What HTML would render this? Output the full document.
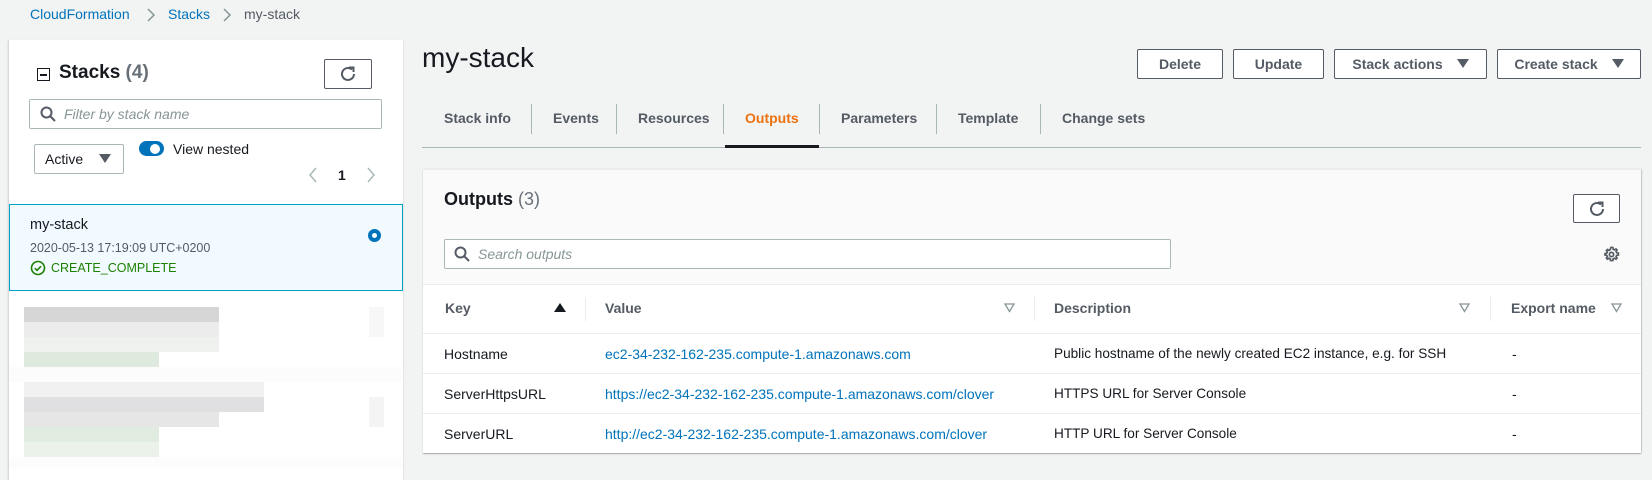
<!DOCTYPE html>
<html><head><meta charset="utf-8"><style>
*{box-sizing:border-box;margin:0;padding:0}
body{width:1652px;height:468px;overflow:hidden;background:#f2f3f3;font-family:"Liberation Sans",sans-serif;font-size:14px;color:#16191f;position:relative}
.a{position:absolute;white-space:nowrap}
.btn{position:absolute;border:1px solid #545b64;border-radius:2px;background:#fff;font-weight:bold;color:#545b64;font-size:14px;display:flex;align-items:center;justify-content:center}
.tab{position:absolute;top:110px;font-weight:bold;color:#545b64;font-size:14px}
.sep{position:absolute;top:104px;width:1px;height:30px;background:#aab7b8}
.hd{position:absolute;top:300px;font-weight:bold;color:#545b64}
.row{position:absolute;left:423px;width:1218px;height:1px;background:#eaeded}
.lnk{color:#0073bb}
.blk{position:absolute;height:15px}
</style></head><body>
<div class="a lnk" style="left:30px;top:6px">CloudFormation</div>
<svg class="a" style="left:146px;top:7px" width="10" height="16"><path d="M2 2l6 6-6 6" stroke="#879596" stroke-width="1.5" fill="none"/></svg>
<div class="a lnk" style="left:168px;top:6px">Stacks</div>
<svg class="a" style="left:222px;top:7px" width="10" height="16"><path d="M2 2l6 6-6 6" stroke="#879596" stroke-width="1.5" fill="none"/></svg>
<div class="a" style="left:244px;top:6px;color:#545b64">my-stack</div>

<div class="a" style="left:8px;top:40px;width:395px;height:440px;background:#fff;border-left:1px solid #d5dbdb;box-shadow:0 1px 2px rgba(0,0,0,.15)"></div>
<div class="a" style="left:37px;top:68px;width:13px;height:13px;border:1.5px solid #16191f"></div>
<div class="a" style="left:40px;top:73.5px;width:7px;height:2px;background:#16191f"></div>
<div class="a" style="left:59px;top:62px;font-size:19px;font-weight:bold">Stacks <span style="color:#687078">(4)</span></div>
<div class="btn" style="left:324px;top:59px;width:48px;height:30px"><svg width="20" height="20" viewBox="0 0 20 20"><path d="M16 10a6 6 0 1 1-2-4.5" stroke="#545b64" stroke-width="2" fill="none"/><path d="M11 3.5h4.5V8" stroke="#545b64" stroke-width="2" fill="none"/></svg></div>
<div class="a" style="left:29px;top:99px;width:353px;height:30px;border:1px solid #aab7b8;border-radius:2px;background:#fff"></div>
<svg class="a" style="left:39px;top:105px" width="18" height="18"><circle cx="7.5" cy="7.5" r="5" stroke="#545b64" stroke-width="2" fill="none"/><path d="M11 11l5 5" stroke="#545b64" stroke-width="2"/></svg>
<div class="a" style="left:64px;top:106px;color:#879596;font-style:italic">Filter by stack name</div>
<div class="a" style="left:34px;top:144px;width:90px;height:30px;border:1px solid #aab7b8;border-radius:2px;background:#fff"></div>
<div class="a" style="left:45px;top:151px">Active</div>
<svg class="a" style="left:99px;top:154px" width="12" height="10"><path d="M0 0h12L6 9z" fill="#545b64"/></svg>
<div class="a" style="left:139px;top:141px;width:25px;height:15px;border-radius:8px;background:#0073bb"></div>
<div class="a" style="left:150px;top:143.5px;width:10px;height:10px;border-radius:5px;background:#fff"></div>
<div class="a" style="left:173px;top:141px">View nested</div>
<svg class="a" style="left:308px;top:167px" width="10" height="16"><path d="M8 1L2 8l6 7" stroke="#aab7b8" stroke-width="1.5" fill="none"/></svg>
<div class="a" style="left:338px;top:167px;font-weight:bold">1</div>
<svg class="a" style="left:366px;top:167px" width="10" height="16"><path d="M2 1l6 7-6 7" stroke="#aab7b8" stroke-width="1.5" fill="none"/></svg>
<div class="a" style="left:9px;top:204px;width:394px;height:87px;background:#f1faff;border:1px solid #00a1c9"></div>
<div class="a" style="left:30px;top:217px;font-size:14.5px">my-stack</div>
<div class="a" style="left:30px;top:241px;font-size:12.5px;color:#545b64">2020-05-13 17:19:09 UTC+0200</div>
<svg class="a" style="left:30px;top:260px" width="16" height="16"><circle cx="8" cy="8" r="6.5" stroke="#1d8102" stroke-width="1.6" fill="none"/><path d="M4.8 8.2l2.2 2.2 4-4.2" stroke="#1d8102" stroke-width="1.6" fill="none"/></svg>
<div class="a" style="left:51px;top:261px;font-size:12.5px;color:#1d8102">CREATE_COMPLETE</div>
<div class="a" style="left:368px;top:229px;width:13px;height:13px;border-radius:50%;border:4px solid #0073bb;background:#fff"></div>
<div class="blk" style="left:24px;top:307px;width:195px;background:#d6d6d6"></div>
<div class="blk" style="left:24px;top:322px;width:195px;background:#ececec"></div>
<div class="blk" style="left:24px;top:337px;width:195px;background:#eef1ee"></div>
<div class="blk" style="left:24px;top:352px;width:135px;background:#dfeadf"></div>
<div class="blk" style="left:369px;top:307px;width:15px;height:30px;background:#f6f7f6"></div>
<div class="blk" style="left:9px;top:367px;width:394px;background:#fcfcfc"></div>
<div class="blk" style="left:24px;top:382px;width:240px;background:#f1f1f1"></div>
<div class="blk" style="left:24px;top:397px;width:240px;background:#e0e0e2"></div>
<div class="blk" style="left:24px;top:412px;width:195px;background:#e6e6e6"></div>
<div class="blk" style="left:24px;top:427px;width:135px;background:#e1ece0"></div>
<div class="blk" style="left:24px;top:442px;width:135px;background:#ebf2ea"></div>
<div class="blk" style="left:369px;top:397px;width:15px;height:30px;background:#f4f4f4"></div>
<div class="blk" style="left:9px;top:457px;width:394px;height:11px;background:#fcfcfc"></div>

<div class="a" style="left:422px;top:42px;font-size:28px">my-stack</div>
<div class="btn" style="left:1137px;top:49px;width:86px;height:30px">Delete</div>
<div class="btn" style="left:1233px;top:49px;width:91px;height:30px">Update</div>
<div class="btn" style="left:1334px;top:49px;width:153px;height:30px">Stack actions<svg style="margin-left:14px" width="12" height="10"><path d="M0 0h12L6 9z" fill="#545b64"/></svg></div>
<div class="btn" style="left:1497px;top:49px;width:144px;height:30px">Create stack<svg style="margin-left:14px" width="12" height="10"><path d="M0 0h12L6 9z" fill="#545b64"/></svg></div>

<div class="tab" style="left:444px">Stack info</div>
<div class="sep" style="left:531px"></div>
<div class="tab" style="left:553px">Events</div>
<div class="sep" style="left:616px"></div>
<div class="tab" style="left:638px">Resources</div>
<div class="sep" style="left:723px"></div>
<div class="tab" style="left:745px;color:#ec7211">Outputs</div>
<div class="sep" style="left:819px"></div>
<div class="tab" style="left:841px">Parameters</div>
<div class="sep" style="left:936px"></div>
<div class="tab" style="left:958px">Template</div>
<div class="sep" style="left:1040px"></div>
<div class="tab" style="left:1062px">Change sets</div>
<div class="a" style="left:422px;top:147px;width:1219px;height:1px;background:#aab7b8"></div>
<div class="a" style="left:725px;top:145px;width:94px;height:3px;background:#16191f"></div>

<div class="a" style="left:423px;top:169px;width:1218px;height:284px;background:#fafafa;border-top:1px solid #eaeded;box-shadow:0 1px 1px rgba(0,0,0,.3),1px 0 1px rgba(0,0,0,.15)"></div>
<div class="a" style="left:444px;top:189px;font-size:18px;font-weight:bold">Outputs <span style="font-weight:normal;color:#687078">(3)</span></div>
<div class="btn" style="left:1573px;top:194px;width:47px;height:29px"><svg width="20" height="20" viewBox="0 0 20 20"><path d="M16 10a6 6 0 1 1-2-4.5" stroke="#545b64" stroke-width="2" fill="none"/><path d="M11 3.5h4.5V8" stroke="#545b64" stroke-width="2" fill="none"/></svg></div>
<div class="a" style="left:444px;top:239px;width:727px;height:30px;border:1px solid #aab7b8;border-radius:2px;background:#fff"></div>
<svg class="a" style="left:453px;top:245px" width="18" height="18"><circle cx="7.5" cy="7.5" r="5" stroke="#545b64" stroke-width="2" fill="none"/><path d="M11 11l5 5" stroke="#545b64" stroke-width="2"/></svg>
<div class="a" style="left:478px;top:246px;color:#879596;font-style:italic">Search outputs</div>
<svg class="a" style="left:1603px;top:246px" width="17" height="17" viewBox="0 0 16 16"><path d="M8 1.2l1.3.3.3 1.6 1.2.6 1.4-.9 1 1 -.9 1.4.6 1.2 1.6.3v1.8l-1.6.3-.6 1.2.9 1.4-1 1-1.4-.9-1.2.6-.3 1.6H7.1l-.3-1.6-1.2-.6-1.4.9-1-1 .9-1.4-.6-1.2-1.6-.3V7.1l1.6-.3.6-1.2-.9-1.4 1-1 1.4.9 1.2-.6.3-1.6z" stroke="#545b64" stroke-width="1.6" fill="none"/><circle cx="8" cy="8" r="2" stroke="#545b64" stroke-width="1.6" fill="none"/></svg>
<div class="a" style="left:423px;top:285px;width:1218px;height:168px;background:#fff"></div>
<div class="row" style="top:284px"></div>
<div class="hd" style="left:445px">Key</div>
<svg class="a" style="left:554px;top:303px" width="12" height="10"><path d="M0 9h12L6 0z" fill="#16191f"/></svg>
<div class="a" style="left:585px;top:297px;width:1px;height:24px;background:#eaeded"></div>
<div class="hd" style="left:605px">Value</div>
<svg class="a" style="left:1004px;top:303px" width="11" height="10"><path d="M1 1h9L5.5 8.5z" stroke="#879596" stroke-width="1.3" fill="none"/></svg>
<div class="a" style="left:1034px;top:297px;width:1px;height:24px;background:#eaeded"></div>
<div class="hd" style="left:1054px">Description</div>
<svg class="a" style="left:1459px;top:303px" width="11" height="10"><path d="M1 1h9L5.5 8.5z" stroke="#879596" stroke-width="1.3" fill="none"/></svg>
<div class="a" style="left:1490px;top:297px;width:1px;height:24px;background:#eaeded"></div>
<div class="hd" style="left:1511px">Export name</div>
<svg class="a" style="left:1611px;top:303px" width="11" height="10"><path d="M1 1h9L5.5 8.5z" stroke="#879596" stroke-width="1.3" fill="none"/></svg>
<div class="row" style="top:333px"></div>
<div class="row" style="top:373px"></div>
<div class="row" style="top:413px"></div>

<div class="a" style="left:444px;top:346px">Hostname</div>
<div class="a lnk" style="left:605px;top:346px">ec2-34-232-162-235.compute-1.amazonaws.com</div>
<div class="a" style="left:1054px;top:346px;font-size:13.6px">Public hostname of the newly created EC2 instance, e.g. for SSH</div>
<div class="a" style="left:1512px;top:346px">-</div>

<div class="a" style="left:444px;top:386px">ServerHttpsURL</div>
<div class="a lnk" style="left:605px;top:386px">https://ec2-34-232-162-235.compute-1.amazonaws.com/clover</div>
<div class="a" style="left:1054px;top:386px;font-size:13.6px">HTTPS URL for Server Console</div>
<div class="a" style="left:1512px;top:386px">-</div>

<div class="a" style="left:444px;top:426px">ServerURL</div>
<div class="a lnk" style="left:605px;top:426px">http://ec2-34-232-162-235.compute-1.amazonaws.com/clover</div>
<div class="a" style="left:1054px;top:426px;font-size:13.6px">HTTP URL for Server Console</div>
<div class="a" style="left:1512px;top:426px">-</div>
</body></html>
